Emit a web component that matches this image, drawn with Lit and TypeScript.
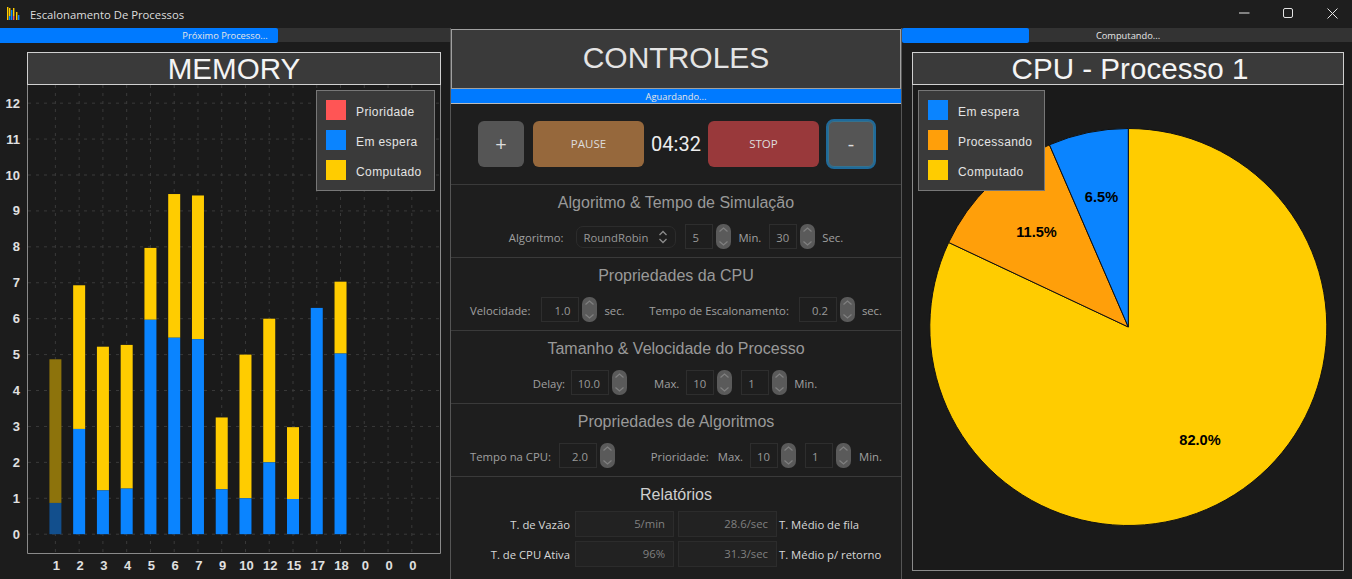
import { LitElement, html, css, svg } from "lit";
import { customElement } from "lit/decorators.js";

const BARS: [string, number, number, boolean?][] = [
  ["1", 0.87, 4.87, true], ["2", 2.93, 6.93], ["3", 1.22, 5.22], ["4", 1.27, 5.27],
  ["5", 5.97, 7.97], ["6", 5.47, 9.47], ["7", 5.43, 9.43], ["9", 1.25, 3.25],
  ["10", 1.0, 5.0], ["12", 2.0, 6.0], ["15", 0.98, 2.98], ["17", 6.3, 6.3],
  ["18", 5.03, 7.03], ["0", 0, 0], ["0", 0, 0], ["0", 0, 0],
];
const BLUE = "#0a84ff", YELLOW = "#ffcc00", ORANGE = "#ff9f0a", RED = "#ff5555";
const X0 = 55.4, DX = 23.76, Y0 = 534.2, DY = 35.92;
const xAt = (i: number) => X0 + i * DX;
const yAt = (v: number) => Y0 - v * DY;

const PIE = [
  { pct: 82, color: YELLOW },
  { pct: 11.5, color: ORANGE },
  { pct: 6.5, color: BLUE },
];
const CX = 1128.3, CY = 327, R = 198.5;

function pieSlices() {
  let start = 0;
  return PIE.map((s) => {
    const end = start + s.pct / 100;
    const pt = (f: number) => {
      const a = f * Math.PI * 2;
      return `${CX + R * Math.sin(a)} ${CY - R * Math.cos(a)}`;
    };
    const d = `M${CX} ${CY}L${pt(start)}A${R} ${R} 0 ${s.pct > 50 ? 1 : 0} 1 ${pt(end)}Z`;
    start = end;
    return svg`<path d=${d} fill=${s.color} stroke="#111" stroke-width="1"></path>`;
  });
}

const spin = html`<svg class="spin" viewBox="0 0 15 25" width="15" height="25">
  <rect width="15" height="25" rx="7" fill="#5a5a5a"></rect>
  <path d="M3.5 7.5 7.5 4l4 3.5M3.5 17.5l4 3.500 4-3.500" fill="none" stroke="#808080" stroke-width="1.2"></path>
</svg>`;

function field(v: string, wide = false) {
  return html`<span class="field"><span class=${wide ? "input wide" : "input"}>${v}</span>${spin}</span>`;
}

@customElement("app-root")
export class AppRoot extends LitElement {
  static styles = css`
    :host { display: block; width: 1352px; height: 579px; overflow: hidden; background: #1c1c1c;
      font-family: "Open Sans", "Noto Sans", sans-serif; color: #a0a0a0; }
    .titlebar { height: 28px; display: flex; align-items: center; background: #1e1e1e; }
    .appicon { margin-left: 6px; }
    .apptitle { margin-left: 10px; font-size: 11.3px; color: #ddd; flex: 1; }
    .winbtns { display: flex; }
    .winbtns svg { display: block; }
    .main { display: grid; grid-template-columns: 450px 452px 450px; height: 551px; }
    .track { display: grid; height: 14px; background: #333; }
    .track > * { grid-area: 1 / 1; }
    .chunk { background: #007aff; border-radius: 0 2px 2px 0; }
    .chunk.l { width: 278px; }
    .chunk.r { width: 127px; border-radius: 2px; }
    .tracktext { text-align: center; font-size: 9.3px; line-height: 15px; color: #e6e6e6; }
    .tracktext.rt { padding-left: 2px; }
    .ptitle { box-sizing: border-box; height: 33px; border: 1px solid #d0d0d0; background: #3a3a3a;
      font: 29.6px/32px "Liberation Sans", sans-serif; color: #f4f4f4; text-align: center; }
    .ptitle.cput { padding-left: 4px; }
    .memtitle { margin: 10px 9px 0 27px; }
    .chartwrap { position: relative; }
    .chartwrap svg, .cpubody svg { display: block; }
    .grid { stroke: #3a3a3a; stroke-width: 1; stroke-dasharray: 3 5; }
    .axis { font: bold 13px "Liberation Sans", sans-serif; fill: #e0e0e0; }
    .pct { font: bold 14.6px "Liberation Sans", sans-serif; fill: #000; }
    .legend { position: absolute; box-sizing: border-box; height: 101px; padding: 9px; display: flex;
      flex-direction: column; gap: 10px; background: #3a3a3a; border: 1px solid #777; }
    .legend.mem { left: 316px; top: 5px; width: 119px; }
    .legend.cpul { left: 5px; top: 5px; width: 127px; }
    .litem { display: flex; align-items: center; gap: 10px; height: 20px;
      font: 12px "Liberation Sans", sans-serif; letter-spacing: 0.4px; color: #e4e4e4; }
    .ltext { padding-top: 4px; }
    .sw { width: 20px; height: 20px; flex: none; }
    .center { border-left: 1px solid #555; border-right: 1px solid #555; padding-top: 1px; background: #1e1e1e; }
    .chead { box-sizing: border-box; height: 60px; border: 1px solid #a0a0a0; background: #3a3a3a;
      font: 30px/56px "Liberation Sans", sans-serif; text-align: center; color: #e4e4e4; }
    .cbar { box-sizing: border-box; height: 15px; background: #007aff; border-bottom: 1px solid #bbb;
      text-align: center; font-size: 9.3px; line-height: 15px; color: #e6e6e6; }
    .controls { box-sizing: border-box; height: 81px; border-bottom: 1px solid #3a3a3a; display: flex;
      align-items: center; padding-left: 27px; padding-bottom: 1px; }
    .btn { box-sizing: border-box; height: 46px; border-radius: 6px; display: flex; align-items: center;
      justify-content: center; font-size: 11.5px; color: #ddd; }
    .sq { width: 46px; background: #555; font-size: 20px; }
    .pause { width: 111px; margin-left: 9px; background: #96683c; }
    .time { width: 64px; text-align: center; font: 20px "Roboto", sans-serif; color: #ececec; }
    .stop { width: 111px; background: #99393b; }
    .minus { width: 50px; height: 50px; margin-left: 7px; background: #555; border: 2px solid #1f6a9a;
      border-radius: 8px; font-size: 20px; outline: 1px solid #34728f; outline-offset: -3px; }
    .sec { box-sizing: border-box; height: 73px; border-bottom: 1px solid #3a3a3a; padding-top: 6px; }
    .sec:last-child { border-bottom: 0; }
    .stitle { height: 22px; font: 16px/24px "Liberation Sans", sans-serif; text-align: center; color: #999; }
    .row { display: flex; align-items: center; height: 25px; margin-top: 11px; font-size: 11.3px; color: #a0a0a0; }
    .row.c { justify-content: center; }
    .row.s { padding-right: 2px; }
    .row.b { justify-content: space-between; padding: 0 19px; }
    .group { display: flex; align-items: center; gap: 7px; }
    .group.tight { gap: 6px; }
    .t { padding-top: 2px; }
    .gap27 { margin-left: 27px; }
    .gap6 { margin-left: 6px; }
    .gap4 { margin-left: 4px; }
    .gap3 { margin-left: 3px; }
    .gap2 { margin-left: 2px; }
    .gap1 { margin-left: 1px; }
    .field { display: flex; align-items: center; gap: 3px; }
    .spin { display: block; }
    .input { box-sizing: border-box; width: 28px; height: 25px; border: 1px solid #2e2e2e; background: #1e1e1e;
      line-height: 25px; padding-left: 6px; color: #999; }
    .input.wide { width: 38px; padding: 0 8px 0 0; text-align: right; }
    .combo { box-sizing: border-box; width: 100px; height: 22px; border: 1px solid #2c2c2c; border-radius: 7px;
      display: flex; align-items: center; justify-content: space-between; padding: 2px 7px 0 6px; color: #999; }
    .combo svg { display: block; margin-top: -1px; }
    .rtitle { color: #cfcfcf; }
    .report { display: grid; grid-template-columns: 120px 99px 99px 1fr; grid-auto-rows: 26px; gap: 4px;
      margin-top: 6px; font-size: 11.3px; align-items: center; color: #d8d8d8; }
    .rl { text-align: right; padding-right: 1px; }
    .rr { margin-left: -2px; }
    .rbox { box-sizing: border-box; height: 26px; border: 1px solid #2c2c2c; background: #222; text-align: right;
      padding-right: 8px; line-height: 24px; color: #808080; }
    .cpupanel { box-sizing: border-box; margin: 10px 8px 0 10px; height: 519px; display: flex; flex-direction: column; }
    .cpubody { position: relative; flex: 1; border: 1px solid #8a8a8a; border-top: 0; background: #1a1a1a; }
    .plotbg { fill: #1a1a1a; }
  `;

  legend(kind: string, items: [string, string][]) {
    return html`<div class="legend ${kind}">
      ${items.map(([c, t]) => html`<div class="litem"><span class="sw" style="background:${c}"></span><span class="ltext">${t}</span></div>`)}
    </div>`;
  }

  chart() {
    const ys = Array.from({ length: 13 }, (_, i) => i);
    return svg`<svg width="450" height="494" viewBox="0 85 450 494">
      <rect class="plotbg" x="27.5" y="85" width="413" height="468"></rect>
      ${ys.map((v) => svg`<line class="grid" x1="28" x2="440" y1=${yAt(v)} y2=${yAt(v)}></line>
        <text class="axis" x="20" y=${yAt(v) + 4.5} text-anchor="end">${v}</text>`)}
      ${BARS.map((_, i) => svg`<line class="grid" y1="85" y2="553" x1=${xAt(i)} x2=${xAt(i)}></line>`)}
      ${BARS.map(([l, b, t, dim], i) => svg`
        ${t > 0 ? svg`<rect class="plotbg" x=${xAt(i) - 6} y=${yAt(t)} width="12" height=${t * DY}></rect>` : ""}
        <g opacity=${dim ? 0.5 : 1}>
          ${t > b ? svg`<rect x=${xAt(i) - 6} y=${yAt(t)} width="12" height=${(t - b) * DY} fill=${YELLOW}></rect>` : ""}
          ${b > 0 ? svg`<rect x=${xAt(i) - 6} y=${yAt(b)} width="12" height=${b * DY} fill=${BLUE}></rect>` : ""}
        </g>
        <text class="axis" x=${xAt(i) + 1} y="570" text-anchor="middle">${l}</text>`)}
      <path d="M27.5 85V553.5H440.5V85" fill="none" stroke="#8a8a8a"></path>
    </svg>`;
  }

  render() {
    return html`
      <div class="titlebar">
        <svg class="appicon" width="14" height="14" viewBox="0 0 14 14">
          <rect x="1" y="0" width="1.4" height="13" fill=${YELLOW}></rect>
          <rect x="3" y="1" width="1.4" height="8" fill=${YELLOW}></rect>
          <rect x="3" y="9" width="1.4" height="4" fill=${BLUE}></rect>
          <rect x="5" y="3" width="1.4" height="10" fill=${BLUE}></rect>
          <rect x="7" y="1" width="1.4" height="8" fill=${YELLOW}></rect>
          <rect x="7" y="9" width="1.4" height="4" fill=${RED}></rect>
          <rect x="10" y="5" width="1.4" height="8" fill=${YELLOW}></rect>
          <rect x="12" y="8" width="1.4" height="5" fill=${BLUE}></rect>
        </svg>
        <div class="apptitle">Escalonamento De Processos</div>
        <div class="winbtns">
          <svg width="132" height="28" viewBox="0 0 132 28">
            <path d="M19 13h10.500" stroke="#e4e4e4" fill="none"></path>
            <rect x="63.500" y="8.500" width="9" height="9" rx="1.500" stroke="#e4e4e4" fill="none"></rect>
            <path d="M107.500 8.500l10 10M117.500 8.500l-10 10" stroke="#e4e4e4" fill="none"></path>
          </svg>
        </div>
      </div>
      <div class="main">
        <div class="left">
          <div class="track"><div class="chunk l"></div><div class="tracktext">Próximo Processo...</div></div>
          <div class="ptitle memtitle">MEMORY</div>
          <div class="chartwrap">
            ${this.chart()}
            ${this.legend("mem", [[RED, "Prioridade"], [BLUE, "Em espera"], [YELLOW, "Computado"]])}
          </div>
        </div>
        <div class="center">
          <div class="chead">CONTROLES</div>
          <div class="cbar">Aguardando...</div>
          <div class="controls">
            <div class="btn sq">+</div>
            <div class="btn pause">PAUSE</div>
            <div class="time">04:32</div>
            <div class="btn stop">STOP</div>
            <div class="btn minus">-</div>
          </div>
          <div class="sec">
            <div class="stitle">Algoritmo &amp; Tempo de Simulação</div>
            <div class="row c"><div class="group">
              <span class="t">Algoritmo:</span>
              <span class="combo gap6">RoundRobin
                <svg width="10" height="14" viewBox="0 0 10 14"><path d="M1.500 5 5 1.500 8.500 5M1.500 9 5 12.500 8.500 9" fill="none" stroke="#8c8c8c" stroke-width="1.300"></path></svg>
              </span>
              <span class="gap2">${field("5")}</span><span class="t">Min.</span>
              <span class="gap1">${field("30")}</span><span class="t">Sec.</span>
            </div></div>
          </div>
          <div class="sec">
            <div class="stitle">Propriedades da CPU</div>
            <div class="row b">
              <div class="group"><span class="t">Velocidade:</span><span class="gap4">${field("1.0", true)}</span><span class="t">sec.</span></div>
              <div class="group"><span class="t">Tempo de Escalonamento:</span><span class="gap3">${field("0.2", true)}</span><span class="t">sec.</span></div>
            </div>
          </div>
          <div class="sec">
            <div class="stitle">Tamanho &amp; Velocidade do Processo</div>
            <div class="row c s">
              <div class="group tight"><span class="t">Delay:</span>${field("10.0", true)}</div>
              <div class="group gap27"><span class="t">Max.</span>${field("10")}<span class="gap2">${field("1")}</span><span class="t">Min.</span></div>
            </div>
          </div>
          <div class="sec">
            <div class="stitle">Propriedades de Algoritmos</div>
            <div class="row b">
              <div class="group"><span class="t">Tempo na CPU:</span><span class="gap1">${field("2.0", true)}</span></div>
              <div class="group"><span class="t">Prioridade:</span><span class="gap2 t">Max.</span>${field("10")}<span class="gap2">${field("1")}</span><span class="gap1 t">Min.</span></div>
            </div>
          </div>
          <div class="sec">
            <div class="stitle rtitle">Relatórios</div>
            <div class="report">
              <span class="rl">T. de Vazão</span><span class="rbox">5/min</span><span class="rbox">28.6/sec</span><span class="rr">T. Médio de fila</span>
              <span class="rl">T. de CPU Ativa</span><span class="rbox">96%</span><span class="rbox">31.3/sec</span><span class="rr">T. Médio p/ retorno</span>
            </div>
          </div>
        </div>
        <div class="right">
          <div class="track"><div class="chunk r"></div><div class="tracktext rt">Computando...</div></div>
          <div class="cpupanel">
            <div class="ptitle cput">CPU - Processo 1</div>
            <div class="cpubody">
              <svg width="430" height="485" viewBox="913 85 430 485">
                ${pieSlices()}
                <text class="pct" x="1101.500" y="202" text-anchor="middle">6.5%</text>
                <text class="pct" x="1036.500" y="237" text-anchor="middle">11.5%</text>
                <text class="pct" x="1200" y="445" text-anchor="middle">82.0%</text>
              </svg>
              ${this.legend("cpul", [[BLUE, "Em espera"], [ORANGE, "Processando"], [YELLOW, "Computado"]])}
            </div>
          </div>
        </div>
      </div>
    `;
  }
}
